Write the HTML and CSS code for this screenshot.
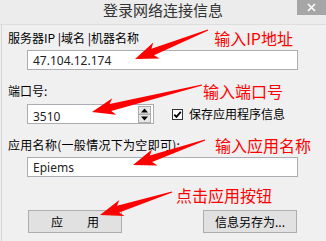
FILE: index.html
```html
<!DOCTYPE html>
<html lang="zh">
<head>
<meta charset="utf-8">
<title>登录网络连接信息</title>
<link rel="stylesheet" href="styles.css">
</head>
<body>
<div class="window">
  <div class="titlebar">
    <span></span>
    <span class="title">登录网络连接信息</span>
    <span class="close"><svg width="9" height="9" viewBox="0 0 9 9"><path d="M1 1L8 8M8 1L1 8" stroke="#fff" stroke-width="1.6"/></svg></span>
  </div>
  <div class="content">
    <div class="row r1">
      <span class="label">服务器IP |域名 |机器名称</span>
      <span class="hint h1">输入IP地址</span>
    </div>
    <div class="field wide f1"><span class="val">47.104.12.174</span></div>

    <div class="row r2">
      <span class="label">端口号:</span>
      <span class="hint h2">输入端口号</span>
    </div>
    <div class="row r3">
      <div class="field port">
        <span class="val">3510</span>
        <svg class="spin" width="13" height="17" viewBox="0 0 13 17">
          <rect x="0.5" y="0.5" width="12" height="7.5" fill="#e6e6e6" stroke="#adadad"/>
          <rect x="0.5" y="8.5" width="12" height="8" fill="#e6e6e6" stroke="#adadad"/>
          <path d="M3 6.5L6.5 2.5L10 6.5Z" fill="#000"/>
          <path d="M3 10.5L6.5 14.5L10 10.5Z" fill="#000"/>
        </svg>
      </div>
      <div class="check">
        <svg class="box" width="11" height="11" viewBox="0 0 11 11">
          <rect x="0.5" y="0.5" width="10" height="10" fill="#fff" stroke="#333"/>
          <path d="M2.3 5.6L4.4 7.8L8.8 2.8" fill="none" stroke="#000" stroke-width="1.8"/>
        </svg>
        <span class="label">保存应用程序信息</span>
      </div>
    </div>

    <div class="row r4">
      <span class="label wide-label">应用名称(一般情况下为空即可):</span>
      <span class="hint h3">输入应用名称</span>
    </div>
    <div class="field wide f3"><span class="val">Epiems</span></div>

    <div class="row r5">
      <span class="hint h4">点击应用按钮</span>
    </div>
    <div class="row r6">
      <button class="btn apply">应&emsp;&emsp;用</button>
      <button class="btn save">信息另存为...</button>
    </div>
  </div>

  <svg class="arrows" width="326" height="241" viewBox="0 0 326 241">
    <g fill="#ff0000">
      <g transform="translate(208 30) rotate(158.3)"><polygon points="0,-0.6 59.5,-3.5 55.5,-8.5 78.5,0 55.5,8.5 59.5,3.5 0,0.6"/></g>
      <g transform="translate(202 85) rotate(166.2)"><polygon points="0,-0.6 94.3,-3.5 90.3,-8.5 113.3,0 90.3,8.5 94.3,3.5 0,0.6"/></g>
      <g transform="translate(205 140) rotate(160.85)"><polygon points="0,-0.6 57.2,-3.5 53.2,-8.5 76.2,0 53.2,8.5 57.2,3.5 0,0.6"/></g>
      <g transform="translate(172 192) rotate(162.3)"><polygon points="0,-0.6 56.6,-3.5 52.6,-8.5 75.6,0 52.6,8.5 56.6,3.5 0,0.6"/></g>
    </g>
  </svg>
</div>
</body>
</html>
```
FILE: styles.css
```css
* { box-sizing: border-box; }
html, body { margin: 0; padding: 0; }
body {
  width: 326px;
  height: 241px;
  overflow: hidden;
  background: #f0f0f0;
  font-family: "Noto Sans CJK SC", "Noto Sans", sans-serif;
  color: #000;
}
.window {
  position: relative;
  width: 326px;
  height: 241px;
}
.titlebar {
  height: 25px;
  display: grid;
  grid-template-columns: 29px 1fr 29px;
  align-items: start;
  background: #ececec;
  border-bottom: 1px solid #dedede;
}
.title {
  text-align: center;
  font-size: 15px;
  line-height: 20px;
  color: #333;
}
.close {
  height: 15px;
  background: #a6a6a6;
  display: flex;
  align-items: center;
  justify-content: center;
}
.close svg { display: block; }
.content {
  border-left: 1px solid #d4d4d4;
  margin-left: 1px;
  height: 216px;
  padding: 3px 0 0 6px;
  display: flex;
  flex-direction: column;
}
.row {
  display: flex;
  align-items: center;
  height: 20px;
}
.label {
  font-size: 12px;
  line-height: 20px;
  white-space: nowrap;
}
.wide-label { letter-spacing: 0.3px; }
.hint {
  color: #ff0000;
  font-size: 16px;
  line-height: 20px;
  white-space: nowrap;
}
.h1 { margin-left: auto; margin-right: 33px; }
.h2 { margin-left: auto; margin-right: 43px; }
.h3 { margin-left: auto; margin-right: 15px; }
.h4 { margin-left: 168px; }
.r2 { margin-top: 11px; }
.r3 { margin-top: 3px; }
.r4 { margin-top: 11px; }
.r5 { margin-top: 8px; }
.r6 { margin-top: 5px; height: 23px; }
.field {
  background: #fff;
  border: 1px solid #abadb3;
  height: 20px;
  display: flex;
  align-items: center;
  padding-left: 5px;
}
.val {
  font-family: "Noto Sans", sans-serif;
  font-size: 12px;
  color: #222;
}
.wide {
  margin-left: 19px;
  width: 271px;
}
.f1 { margin-top: 2px; }
.f3 { margin-top: 2px; align-items: flex-end; }
.f3 .val { line-height: 16px; }
.port {
  margin-left: 19px;
  width: 127px;
  padding-right: 2px;
}
.port .val { flex: 1; padding-top: 4px; }
.spin { display: block; }
.check {
  display: flex;
  align-items: center;
  margin-left: 18px;
}
.box { display: block; margin-right: 6px; }
.btn {
  height: 23px;
  width: 94px;
  background: #e1e1e1;
  border: 1px solid #adadad;
  font-family: "Noto Sans CJK SC", sans-serif;
  font-size: 12px;
  color: #000;
  padding: 0;
}
.apply { margin-left: 20px; }
.save { margin-left: 81px; }
.arrows {
  position: absolute;
  left: 0;
  top: 0;
  pointer-events: none;
}
```
